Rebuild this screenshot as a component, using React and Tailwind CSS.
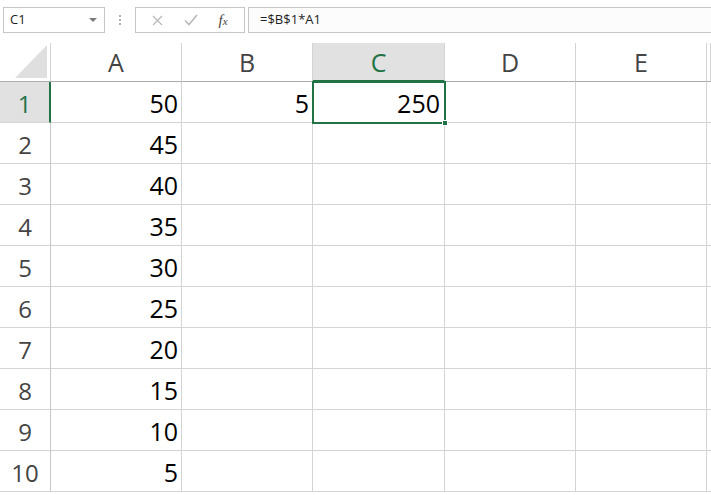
import React from 'react';

const cols = ['A', 'B', 'C', 'D', 'E', ''];
const values = [50, 45, 40, 35, 30, 25, 20, 15, 10, 5];

function FormulaBar() {
    return (
        <div className="h-[43px] flex items-start pt-[7px] text-[13px] text-[#222]">
            <div className="ml-[3px] w-[102px] h-[26px] border border-[#c6c6c6] bg-white flex items-center justify-between pl-[6px] pr-[7px]">
                <span>C1</span>
                <svg width="8" height="4" viewBox="0 0 8 4"><path d="M0 0h8L4 4z" fill="#7a7a7a" /></svg>
            </div>
            <div className="w-[30px] h-[26px] flex flex-col items-center justify-center gap-[2px]">
                <span className="w-[2px] h-[2px] bg-[#b0b0b0]" />
                <span className="w-[2px] h-[2px] bg-[#b0b0b0]" />
                <span className="w-[2px] h-[2px] bg-[#b0b0b0]" />
            </div>
            <div className="w-[110px] h-[26px] border border-[#c6c6c6] bg-white flex items-center justify-around px-[6px]">
                <svg width="11" height="11" viewBox="0 0 11 11"><path d="M1 1l9 9M10 1L1 10" stroke="#b8b8b8" strokeWidth="1.2" /></svg>
                <svg width="14" height="12" viewBox="0 0 14 12"><path d="M1 6.5l4 4L13 1" stroke="#b8b8b8" strokeWidth="1.6" fill="none" /></svg>
                <span className="italic text-[#444] text-[15px] leading-none" style={{ fontFamily: '"Liberation Serif", serif' }}>f<span className="text-[11px]">x</span></span>
            </div>
            <div className="ml-[3px] flex-1 h-[26px] border border-r-0 border-[#c6c6c6] bg-[#fcfcfc] flex items-center pl-[11px]">
                =$B$1*A1
            </div>
        </div>
    );
}

export default function App() {
    return (
        <div className="w-[711px] h-[495px] overflow-hidden bg-white" style={{ fontFamily: '"Open Sans", "Liberation Sans", sans-serif' }}>
            <FormulaBar />
            <div className="grid grid-cols-[51px_131px_131px_132px_131px_131px_1fr] grid-rows-[39px_repeat(10,41px)]">
                <div className="border-r border-r-[#d4d4d4] border-b border-[#ababab] flex items-end justify-end pr-[3px] pb-[3px]">
                    <svg width="32" height="33" viewBox="0 0 32 33"><path d="M0 33L32 0V33z" fill="#dfdfdf" /></svg>
                </div>
                {cols.map((c, i) => (
                    <div
                        key={c + i}
                        className={
                            c === 'C'
                                ? 'bg-[#e1e1e1] border-r border-[#d4d4d4] border-b-2 border-b-[#217346] text-[#217346] flex items-center justify-center text-[25px] pt-[3px]'
                                : 'border-r border-[#d4d4d4] border-b border-b-[#ababab] text-[#444] flex items-center justify-center text-[25px] pt-[2px]'
                        }
                    >
                        {c}
                    </div>
                ))}
                {values.map((v, r) => (
                    <React.Fragment key={r}>
                        <div
                            className={
                                r === 0
                                    ? 'bg-[#e1e1e1] border-r-2 border-r-[#217346] border-b border-[#d4d4d4] text-[#217346] flex items-center justify-center text-[24px] pt-[3px]'
                                    : 'border-r border-r-[#c8c8c8] border-b border-[#d4d4d4] text-[#444] flex items-center justify-center text-[24px] pt-[3px]'
                            }
                        >
                            {r + 1}
                        </div>
                        <div className="border-r border-b border-[#d4d4d4] flex items-center justify-end pr-[3px] pt-[3px] text-[25px] text-black">{v}</div>
                        <div className="border-r border-b border-[#d4d4d4] flex items-center justify-end pr-[3px] pt-[3px] text-[25px] text-black">{r === 0 ? 5 : ''}</div>
                        <div
                            className={
                                r === 0
                                    ? 'relative border-r border-b border-[#d4d4d4] outline-2 outline-[#217346] -outline-offset-1 flex items-center justify-end pr-[4px] pt-[3px] text-[25px] text-black'
                                    : 'border-r border-b border-[#d4d4d4]'
                            }
                        >
                            {r === 0 && (
                                <>
                                    250
                                    <span className="absolute right-[-4px] bottom-[-4px] w-[6px] h-[6px] bg-[#217346] border border-white" />
                                </>
                            )}
                        </div>
                        <div className="border-r border-b border-[#d4d4d4]" />
                        <div className="border-r border-b border-[#d4d4d4]" />
                        <div className="border-b border-[#d4d4d4]" />
                    </React.Fragment>
                ))}
            </div>
        </div>
    );
}
